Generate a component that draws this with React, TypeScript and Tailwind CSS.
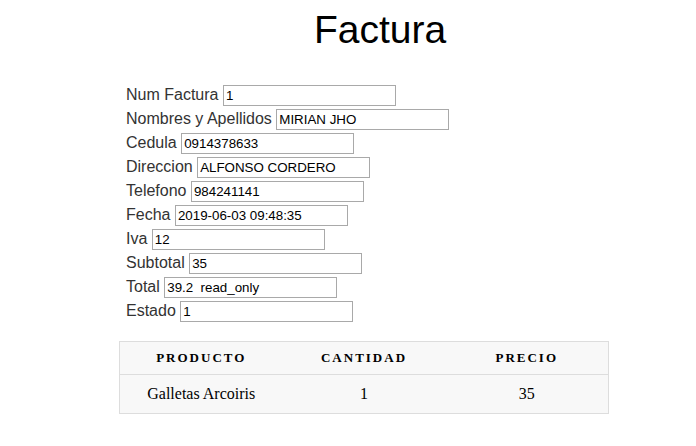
const campos = [
  { label: 'Num Factura', value: '1' },
  { label: 'Nombres y Apellidos', value: 'MIRIAN JHO' },
  { label: 'Cedula', value: '0914378633' },
  { label: 'Direccion', value: 'ALFONSO CORDERO' },
  { label: 'Telefono', value: '984241141' },
  { label: 'Fecha', value: '2019-06-03 09:48:35' },
  { label: 'Iva', value: '12' },
  { label: 'Subtotal', value: '35' },
  { label: 'Total', value: '39.2  read_only' },
  { label: 'Estado', value: '1' },
]

const detalle = [{ producto: 'Galletas Arcoiris', cantidad: 1, precio: 35 }]

export default function App() {
  return (
    <div className="w-[696px] h-[446px] bg-white font-['Liberation_Sans',Arial,sans-serif] text-[#333]">
      <div className="pl-[64px] pt-[7px] text-center">
        <h1 className="text-[39px] leading-[46px] text-black">Factura</h1>
      </div>

      <form className="pl-[126px] pt-[30px]">
        {campos.map((c) => (
          <div key={c.label} className="flex items-center h-[24px] text-[16px]">
            <label className="whitespace-pre">{c.label} </label>
            <input
              type="text"
              readOnly
              value={c.value}
              className="w-[173px] h-[21px] border border-[#a9a9a9] px-[2px] text-[13.33px] text-black font-['Liberation_Sans',Arial,sans-serif] whitespace-pre"
            />
          </div>
        ))}
      </form>

      <div className="pl-[119px] pt-[18px]">
        <table className="w-[490px] table-fixed border border-[#ddd] bg-[#f8f8f8] font-['Liberation_Serif','Times_New_Roman',serif] text-black">
          <thead>
            <tr className="h-[33px] border-b border-[#ddd]">
              <th className="text-[13px] font-bold tracking-[2px] text-center">PRODUCTO</th>
              <th className="text-[13px] font-bold tracking-[2px] text-center">CANTIDAD</th>
              <th className="text-[13px] font-bold tracking-[2px] text-center">PRECIO</th>
            </tr>
          </thead>
          <tbody>
            {detalle.map((d) => (
              <tr key={d.producto} className="h-[39px]">
                <td className="text-[16px] text-center">{d.producto}</td>
                <td className="text-[16px] text-center">{d.cantidad}</td>
                <td className="text-[16px] text-center">{d.precio}</td>
              </tr>
            ))}
          </tbody>
        </table>
      </div>
    </div>
  )
}
